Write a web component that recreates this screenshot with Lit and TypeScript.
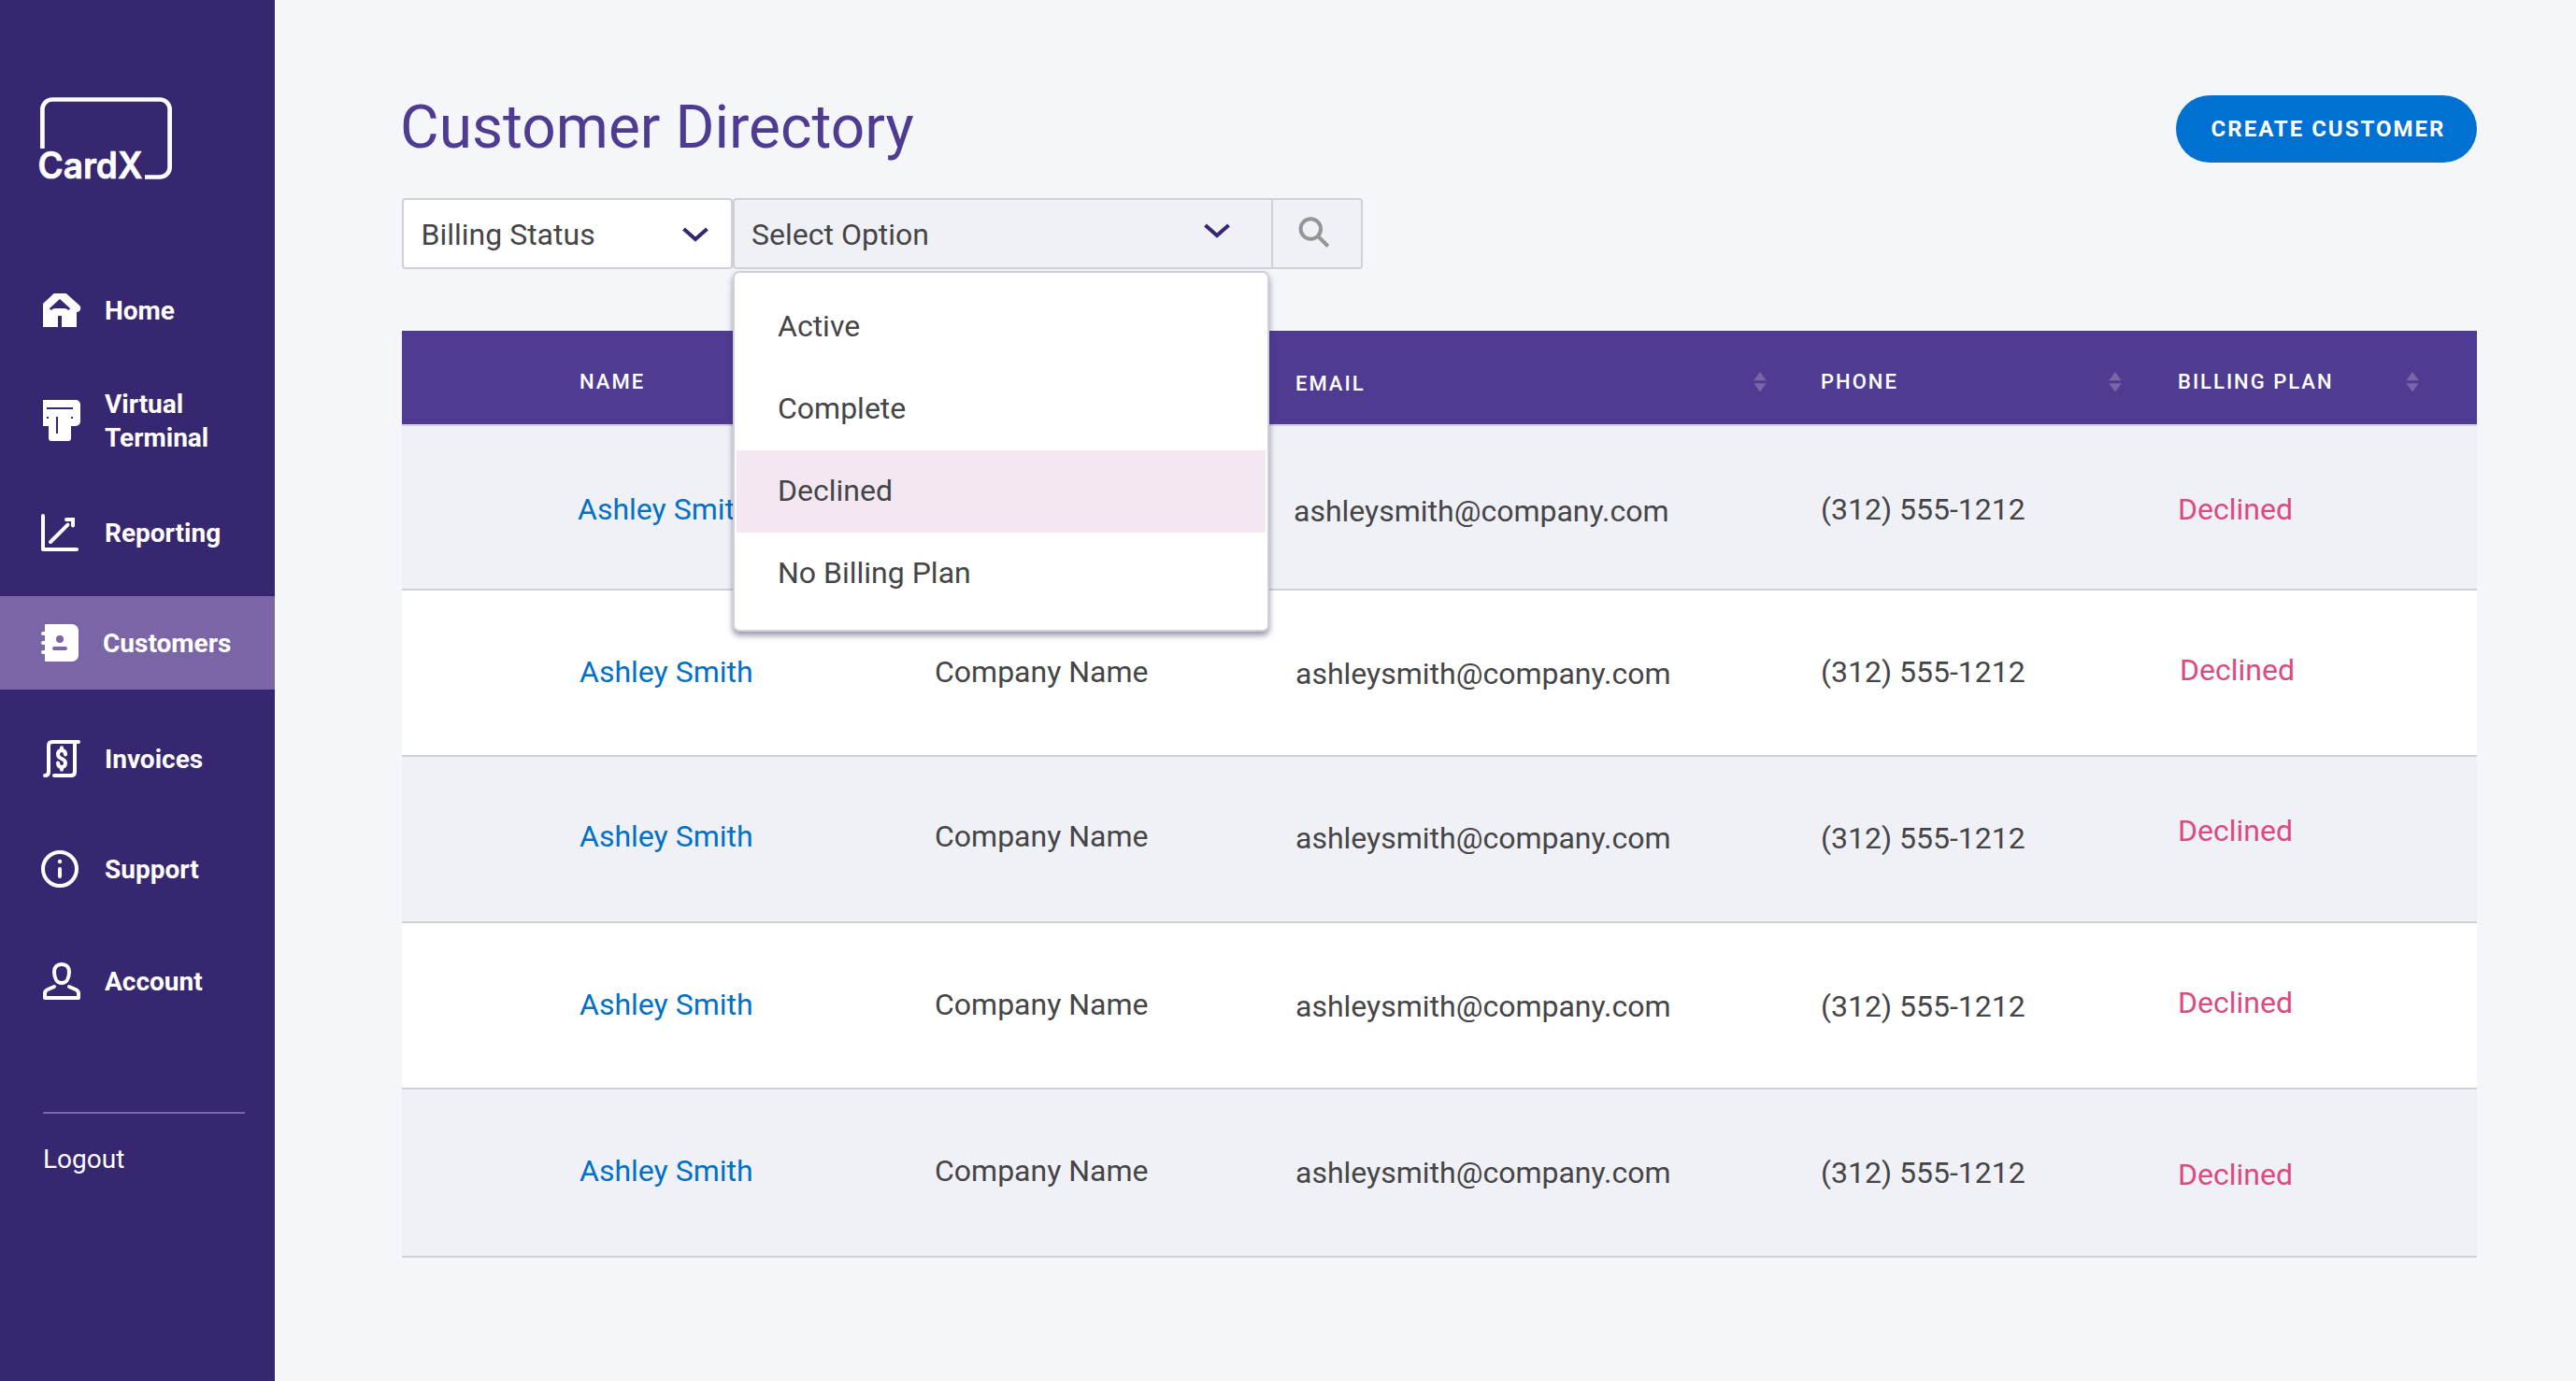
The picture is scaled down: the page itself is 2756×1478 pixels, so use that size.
import { LitElement, html, svg, css } from "lit";
import { customElement } from "lit/decorators.js";
import { styleMap } from "lit/directives/style-map.js";

/** Text offsets inside each row: name, company, email, phone, billing plan. */
const ROWS = [
  { name: "Ashley Smith", company: "Company Name", email: "ashleysmith@company.com", phone: "(312) 555-1212", plan: "Declined", tops: [70, 70, 72, 70, 70], lefts: [-2, 0, -2, 0, 0], height: 176 },
  { name: "Ashley Smith", company: "Company Name", email: "ashleysmith@company.com", phone: "(312) 555-1212", plan: "Declined", tops: [68, 68, 70, 68, 66], lefts: [0, 0, 0, 0, 2], height: 178 },
  { name: "Ashley Smith", company: "Company Name", email: "ashleysmith@company.com", phone: "(312) 555-1212", plan: "Declined", tops: [66, 66, 68, 68, 60], lefts: [0, 0, 0, 0, 0], height: 178 },
  { name: "Ashley Smith", company: "Company Name", email: "ashleysmith@company.com", phone: "(312) 555-1212", plan: "Declined", tops: [68, 68, 70, 70, 66], lefts: [0, 0, 0, 0, 0], height: 178 },
  { name: "Ashley Smith", company: "Company Name", email: "ashleysmith@company.com", phone: "(312) 555-1212", plan: "Declined", tops: [68, 68, 70, 70, 72], lefts: [0, 0, 0, 0, 0], height: 180 },
];

@customElement("app-root")
export class AppRoot extends LitElement {
  static styles = css`
    :host { display: block; }
    * { box-sizing: border-box; }
    .page { display: flex; width: 2756px; height: 1478px; overflow: hidden; background: #f5f6fa; font-family: Roboto, sans-serif; color: #454547; font-size: 32px; }
    svg { display: block; flex: none; overflow: visible; }
    .side { width: 294px; flex: none; background: #372670; color: #fff; padding-top: 100px; }
    .logo { margin-left: 40px; }
    .logotext { font: 600 39px Inter, sans-serif; fill: #fff; stroke: #fff; stroke-width: 0.7; stroke-linejoin: round; }
    .nav { display: flex; flex-direction: column; margin-top: 78px; }
    .item { display: flex; align-items: center; padding-left: 44px; font-size: 28px; font-weight: 700; line-height: 36px; }
    .item span { margin-left: 24px; padding-top: 1px; }
    .i0 { height: 116px; }
    .i1 { height: 120px; }
    .i2 { height: 128px; padding-bottom: 8px; }
    .i3 { height: 100px; background: #7a66a6; }
    .i3 span { margin-left: 22px; }
    .i4 { height: 148px; }
    .i5 { height: 88px; }
    .i6 { height: 152px; }
    .rule { margin: 64px 32px 0 46px; height: 2px; background: #7a66a6; }
    .logout { margin: 31px 0 0 46px; font-size: 28px; line-height: 36px; }
    .main { flex: 1; padding: 96px 106px 0 136px; }
    .head { display: flex; justify-content: space-between; align-items: center; height: 84px; }
    h1 { margin: -3px 0 0 -2px; font-weight: 400; font-size: 64px; line-height: 84px; color: #4f3c92; }
    .btn { width: 322px; height: 72px; border-radius: 36px; background: #0070d2; color: #fff; display: flex; align-items: center; justify-content: center; font-size: 24px; font-weight: 700; letter-spacing: 2px; padding-left: 4px; }
    .filters { display: flex; margin-top: 32px; height: 76px; position: relative; }
    .sel { display: flex; align-items: center; justify-content: space-between; border: 2px solid #d0d1d8; border-radius: 4px; height: 76px; padding-top: 2px; }
    .s1 { width: 354px; background: #fff; padding-right: 24px; padding-left: 18.5px; }
    .s2 { width: 578px; background: #f0f1f7; padding-right: 44px; padding-left: 18px; border-radius: 4px 0 0 4px; }
    .s2 svg { margin-top: -8px; }
    .s3 { width: 98px; margin-left: -2px; background: #f0f1f7; border-radius: 0 4px 4px 0; padding: 0 0 3px 26px; }
    .menu { position: absolute; left: 354px; top: 78px; width: 574px; height: 386px; background: #fff; border: 2px solid #d0d1d8; border-radius: 7px; padding: 14px 2px 0; box-shadow: 0 4px 6px rgba(50, 40, 90, 0.5); z-index: 1; }
    .opt { height: 88px; line-height: 86px; padding-left: 44px; }
    .opt.on { background: #f3e8f1; }
    .table { margin-top: 66px; }
    .row { display: grid; grid-template-columns: 190px 380px 386px 562px 382px 1fr; align-items: start; border-bottom: 2px solid #d0d1d8; background: #fff; }
    .row > div { line-height: 38px; }
    .row:nth-child(even) { background: #f0f1f7; }
    .table .th { background: #4f3c92; height: 102px; border-color: #d6d2e0; color: #fff; font-size: 22px; font-weight: 500; letter-spacing: 2px; }
    .th > div { display: flex; align-items: flex-start; justify-content: space-between; padding-top: 42px; }
    .row.th > div { line-height: 26px; }
    .th svg { margin-top: 2px; }
    .th .email { padding-top: 44px; padding-right: 58px; }
    .th .email svg { margin-top: 0; }
    .th .phone { padding-right: 60px; }
    .th .plan { padding-right: 62px; }
    .link { color: #0070c8; }
    .red { color: #dc4a80; }
  `;

  private icons = [
    svg`<g><path fill="#fff" d="M2 15 13.700 4h13L41 16.800a4.200 4.200 0 0 1-3 7.200V40H2z"/><path fill="#372670" d="M20 10l11.300 10.200L29 22q-1.500-2-4-2H15q-2.500 0-4 2l-2.300-1.800zM18 28h4v12h-4z"/></g>`,
    svg`<g><path fill="#fff" d="M2 0h35a5 5 0 0 1 5 5v18a5 5 0 0 1-5 5h-5v13a3 3 0 0 1-3 3H11a3 3 0 0 1-3-3V28H2z"/><path stroke="#372670" stroke-width="2" fill="none" d="M6 9h28M17 18v18M6 19h2M32 19h2"/></g>`,
    svg`<g fill="none" stroke="#fff" stroke-width="4" stroke-linecap="round" stroke-linejoin="round"><path d="M2 4v36h36M10 32 28.500 13.700"/><path stroke-linejoin="miter" d="M27 8h7v6.500"/></g>`,
    svg`<g><path fill="#fff" d="M5 2h28a7 7 0 0 1 7 7v26a7 7 0 0 1-7 7H5a1 1 0 0 1-1-1V3a1 1 0 0 1 1-1z"/><path stroke="#fff" stroke-width="4" stroke-linecap="round" d="M2 12h4M2 22h4M2 32h4"/><circle cx="20" cy="18" r="4" fill="#7a66a6"/><path stroke="#7a66a6" stroke-width="4" stroke-linecap="round" d="M14 28h12"/></g>`,
    svg`<g fill="none" stroke="#fff" stroke-width="4" stroke-linecap="round" stroke-linejoin="round"><path d="M4 40c3 0 4-2 4-4V8q0-4 4-4h28M36 5v31q0 4-4 4H14"/><path d="M26 17.500q0-4.500-4-4.500t-4 4.500q0 2.800 4 4.500t4 4.500q0 4.500-4 4.500t-4-4.500M22 10.300v2.500M22 31.200v2.500"/></g>`,
    svg`<g><circle cx="20" cy="22" r="18" fill="none" stroke="#fff" stroke-width="4"/><circle cx="20" cy="14" r="2.200" fill="#fff"/><path stroke="#fff" stroke-width="4" stroke-linecap="round" d="M20 22v8"/></g>`,
    svg`<g fill="none" stroke="#fff" stroke-width="4" stroke-linecap="round" stroke-linejoin="round"><path d="M22 4c5 0 8 3 8 8 0 7-3 12-8 12s-8-5-8-12c0-5 3-8 8-8zM14 28 7 31q-3 1.500-3 4v5h36v-5q0-2.500-3-4l-7-3"/></g>`,
  ];

  private chevron() {
    return html`<svg width="28" height="16" viewBox="0 0 28 16"><path d="M1.500 2 14 13 26.500 2" fill="none" stroke="#372670" stroke-width="4"/></svg>`;
  }

  private sort() {
    return html`<svg width="14" height="22" viewBox="0 0 14 22"><path fill="#7a66a6" d="M7 0l6.800 9.200H.2zM7 21.500.2 12.300h13.600z"/></svg>`;
  }

  private row(r: (typeof ROWS)[number]) {
    const cells = [r.name, r.company, r.email, r.phone, r.plan];
    const kinds = ["link", "", "", "", "red"];
    return html`<div class="row" style=${styleMap({ height: `${r.height}px` })}>
      <div></div>
      ${cells.map((c, i) => html`<div class=${kinds[i]} style=${styleMap({ paddingTop: `${r.tops[i]}px`, marginLeft: `${r.lefts[i]}px` })}>${c}</div>`)}
    </div>`;
  }

  render() {
    const labels = ["Home", html`Virtual<br />Terminal`, "Reporting", "Customers", "Invoices", "Support", "Account"];
    return html`
      <div class="page">
        <div class="side">
          <svg class="logo" width="148" height="96" viewBox="0 0 148 96">
            <path d="M5.400 59V17a10.500 10.500 0 0 1 10.500-10.500h115.200a10.500 10.500 0 0 1 10.500 10.500v62a10.500 10.500 0 0 1-10.500 10.500H115" fill="none" stroke="#fff" stroke-width="4.700" />
            <text class="logotext" x="0.500" y="91.300" textLength="112" lengthAdjust="spacingAndGlyphs">CardX</text>
          </svg>
          <div class="nav">
            ${labels.map((l, i) => html`<div class="item i${i}"><svg width="44" height="44" viewBox="0 0 44 44">${this.icons[i]}</svg><span>${l}</span></div>`)}
          </div>
          <div class="rule"></div>
          <div class="logout">Logout</div>
        </div>
        <div class="main">
          <div class="head"><h1>Customer Directory</h1><div class="btn">CREATE CUSTOMER</div></div>
          <div class="filters">
            <div class="sel s1">Billing Status ${this.chevron()}</div>
            <div class="sel s2">Select Option ${this.chevron()}</div>
            <div class="sel s3"><svg width="36" height="36" viewBox="0 0 36 36"><g fill="none" stroke="#959595" stroke-width="4"><circle cx="14.300" cy="14" r="10.700"/><path d="m21.800 21.500 11 11"/></g></svg></div>
            <div class="menu">
              ${["Active", "Complete", "Declined", "No Billing Plan"].map((o) => html`<div class="opt ${o === "Declined" ? "on" : ""}">${o}</div>`)}
            </div>
          </div>
          <div class="table">
            <div class="row th">
              <div></div>
              <div>NAME</div>
              <div></div>
              <div class="email">EMAIL ${this.sort()}</div>
              <div class="phone">PHONE ${this.sort()}</div>
              <div class="plan">BILLING PLAN ${this.sort()}</div>
            </div>
            ${ROWS.map((r) => this.row(r))}
          </div>
        </div>
      </div>
    `;
  }
}
